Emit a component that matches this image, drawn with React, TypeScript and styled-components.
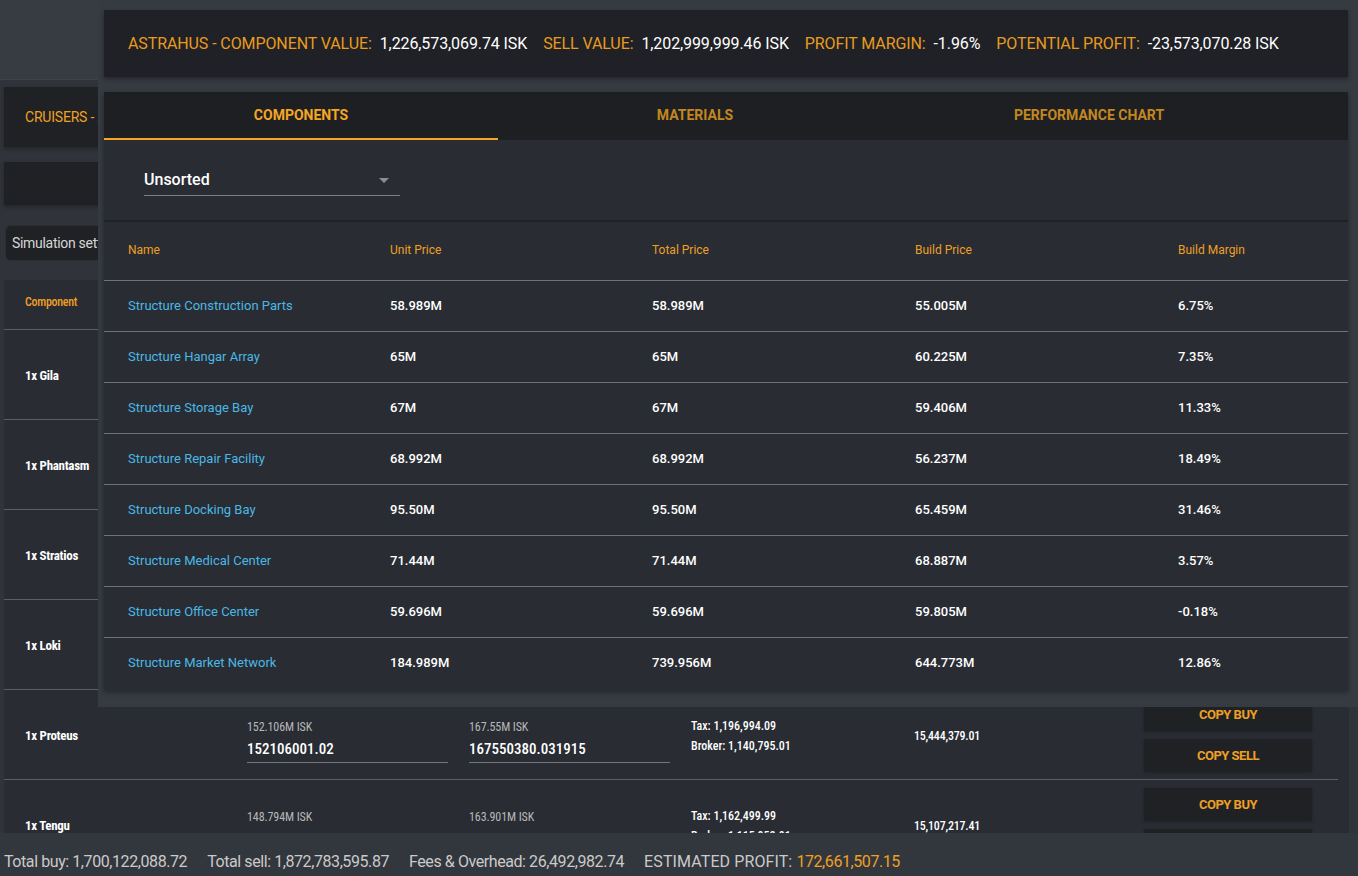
import React from "react"
import styled, { createGlobalStyle } from "styled-components"

const colors = {
  page: "#373b42",
  main: "#30343a",
  overlay: "#363a41",
  card: "#1f2125",
  tabBar: "#1d1f23",
  panel: "#292c33",
  orange: "#eea024",
  orangeDim: "#c4871f",
  cyan: "#4ab8e6",
  text: "#ffffff",
  muted: "#b8b8b8",
}

const GlobalStyle = createGlobalStyle`
  html, body {
    margin: 0;
    padding: 0;
    background: ${colors.page};
    font-family: Roboto, "Liberation Sans", sans-serif;
    overflow: hidden;
  }
  * { box-sizing: border-box; }
`

const Page = styled.div`
  width: 1358px;
  height: 876px;
  padding-top: 79px;
  position: relative;
`

/* ---------- background page ---------- */

const Main = styled.div`
  background: ${colors.main};
  border-top: 1px solid #3e424a;
  padding: 7px 9px 0 4px;
  height: 797px;
  font-family: "Roboto Condensed", Roboto, sans-serif;
`

const TitleCard = styled.div`
  height: 60px;
  background: ${colors.card};
  box-shadow: 0 2px 4px rgba(0, 0, 0, 0.3);
  display: flex;
  align-items: center;
  padding-left: 21px;
  color: ${colors.orange};
  font-family: Roboto, sans-serif;
  font-size: 14px;
  letter-spacing: -0.2px;
  margin-bottom: 15px;
`

const EmptyCard = styled.div`
  height: 43px;
  background: ${colors.card};
  box-shadow: 0 2px 4px rgba(0, 0, 0, 0.3);
  margin-bottom: 20px;
`

const SimButton = styled.button`
  display: flex;
  align-items: center;
  height: 36px;
  width: 220px;
  margin-left: 1px;
  padding: 0 6px;
  border: 1px solid #2b2e33;
  border-radius: 6px;
  background: ${colors.card};
  color: #d6d6d6;
  font-family: Roboto, sans-serif;
  font-size: 14px;
  letter-spacing: -0.3px;
  margin-bottom: 19px;
`

const Table = styled.div`
  background: ${colors.panel};
  height: 560px;
`

const Row = styled.div<{ $head?: boolean }>`
  display: grid;
  grid-template-columns: 222px 222px 222px 223px 230px 168px;
  align-items: center;
  height: ${p => (p.$head ? "50px" : "90px")};
  padding-left: 21px;
  margin-right: 11px;
  border-bottom: 1px solid #5b5e64;
`

const HeadCell = styled.div`
  color: ${colors.orange};
  font-size: 12px;
  font-weight: 500;
  letter-spacing: -0.3px;
  margin-top: -5px;
`

const ShipName = styled.div`
  color: ${colors.text};
  font-size: 13px;
  font-weight: 700;
  letter-spacing: -0.3px;
  margin-top: 2px;
`

const PriceGroup = styled.div`
  width: 201px;
  margin-top: 14px;
`

const PriceLabel = styled.div`
  color: ${colors.muted};
  font-size: 12px;
  line-height: 14px;
  letter-spacing: -0.1px;
  margin-bottom: 2px;
`

const PriceInput = styled.div`
  color: ${colors.text};
  font-size: 15px;
  font-weight: 500;
  line-height: 26px;
  border-bottom: 1px solid #73767c;
`

const Fees = styled.div`
  color: ${colors.text};
  font-size: 12px;
  line-height: 20px;
  font-weight: 500;
  margin-top: 2px;
`

const Profit = styled.div`
  color: ${colors.text};
  font-size: 12px;
  font-weight: 500;
  letter-spacing: -0.2px;
  margin-top: 2px;
`

const Buttons = styled.div`
  display: flex;
  flex-direction: column;
  gap: 8px;
`

const CopyButton = styled.button`
  height: 33px;
  width: 168px;
  border: none;
  background: ${colors.card};
  box-shadow: 0 1px 3px rgba(0, 0, 0, 0.25);
  color: ${colors.orange};
  font-family: Roboto, sans-serif;
  font-size: 13px;
  font-weight: 700;
  letter-spacing: -0.5px;
`

const Footer = styled.div`
  position: fixed;
  left: 0;
  right: 0;
  bottom: 0;
  height: 43px;
  background: #32363d;
  display: flex;
  align-items: flex-end;
  gap: 20px;
  padding: 0 4px 3px;
  color: #cacaca;
  font-size: 16px;
  line-height: 22px;
  letter-spacing: -0.42px;
`

const Highlight = styled.span`
  color: ${colors.orange};
`

const FooterStrong = styled.span`
  letter-spacing: 0.1px;
`

/* ---------- overlay dialog ---------- */

const Overlay = styled.div`
  position: fixed;
  left: 98px;
  top: 0;
  right: 0;
  height: 707px;
  background: ${colors.overlay};
  padding: 10px 10px 0 6px;
  display: flex;
  flex-direction: column;
  gap: 15px;
`

const Summary = styled.div`
  height: 67px;
  background: #1f2126;
  box-shadow: 0 2px 4px rgba(0, 0, 0, 0.35);
  display: flex;
  align-items: center;
  gap: 16px;
  padding: 0 24px 0;
  font-size: 16px;
  white-space: nowrap;
`

const SummaryItem = styled.span`
  display: flex;
  gap: 8px;
`

const SummaryLabel = styled.span`
  color: #e89b1e;
  letter-spacing: -0.1px;
`

const SummaryValue = styled.span`
  color: ${colors.text};
  letter-spacing: -0.1px;
`

const Panel = styled.div`
  height: 598px;
  background: ${colors.panel};
  box-shadow: 0 2px 5px rgba(0, 0, 0, 0.35);
  display: flex;
  flex-direction: column;
`

const Tabs = styled.div`
  display: flex;
  height: 48px;
  background: ${colors.tabBar};
`

const Tab = styled.div<{ $active?: boolean }>`
  width: 394px;
  display: flex;
  align-items: center;
  justify-content: center;
  font-size: 14px;
  font-weight: 700;
  text-transform: uppercase;
  color: ${p => (p.$active ? "#f5a623" : colors.orangeDim)};
  border-bottom: 2px solid ${p => (p.$active ? "#f5a623" : "transparent")};
`

const SortBar = styled.div`
  padding: 26px 0 24px 40px;
  border-bottom: 2px solid #1f2125;
`

const Select = styled.div`
  width: 256px;
  height: 30px;
  display: flex;
  align-items: center;
  justify-content: space-between;
  border-bottom: 1px solid #7b7e84;
  color: ${colors.text};
  font-size: 16px;
  font-weight: 500;
  padding-bottom: 2px;
`

const GridRow = styled.div<{ $head?: boolean; $last?: boolean }>`
  display: grid;
  grid-template-columns: 262px 262px 263px 263px 1fr;
  align-items: center;
  padding-left: 24px;
  height: ${p => (p.$head ? "59px" : "51px")};
  border-bottom: 1px solid ${p => (p.$last ? "transparent" : "#6f7278")};
  font-size: ${p => (p.$head ? "12px" : "13px")};
`

const ColHead = styled.div`
  color: ${colors.orange};
  margin-top: -2px;
`

const NameCell = styled.div`
  color: ${colors.cyan};
  margin-top: -2px;
`

const ValueCell = styled.div`
  color: ${colors.text};
  font-weight: 500;
  margin-top: -2px;
`

const ships = [
  { name: "1x Gila" },
  { name: "1x Phantasm" },
  { name: "1x Stratios" },
  { name: "1x Loki" },
  {
    name: "1x Proteus",
    buyLabel: "152.106M ISK",
    buy: "152106001.02",
    sellLabel: "167.55M ISK",
    sell: "167550380.031915",
    tax: "1,196,994.09",
    broker: "1,140,795.01",
    profit: "15,444,379.01",
  },
  {
    name: "1x Tengu",
    buyLabel: "148.794M ISK",
    buy: "148794000.00",
    sellLabel: "163.901M ISK",
    sell: "163901000.00",
    tax: "1,162,499.99",
    broker: "1,115,952.91",
    profit: "15,107,217.41",
  },
]

const components = [
  ["Structure Construction Parts", "58.989M", "58.989M", "55.005M", "6.75%"],
  ["Structure Hangar Array", "65M", "65M", "60.225M", "7.35%"],
  ["Structure Storage Bay", "67M", "67M", "59.406M", "11.33%"],
  ["Structure Repair Facility", "68.992M", "68.992M", "56.237M", "18.49%"],
  ["Structure Docking Bay", "95.50M", "95.50M", "65.459M", "31.46%"],
  ["Structure Medical Center", "71.44M", "71.44M", "68.887M", "3.57%"],
  ["Structure Office Center", "59.696M", "59.696M", "59.805M", "-0.18%"],
  ["Structure Market Network", "184.989M", "739.956M", "644.773M", "12.86%"],
]

const summary = [
  ["ASTRAHUS - COMPONENT VALUE:", "1,226,573,069.74 ISK"],
  ["SELL VALUE:", "1,202,999,999.46 ISK"],
  ["PROFIT MARGIN:", "-1.96%"],
  ["POTENTIAL PROFIT:", "-23,573,070.28 ISK"],
]

// rows hidden behind the dialog only show their ship name
function ShipRow({ ship }) {
  return (
    <Row>
      <ShipName>{ship.name}</ShipName>
      {ship.buy && (
        <>
          <PriceGroup>
            <PriceLabel>{ship.buyLabel}</PriceLabel>
            <PriceInput>{ship.buy}</PriceInput>
          </PriceGroup>
          <PriceGroup>
            <PriceLabel>{ship.sellLabel}</PriceLabel>
            <PriceInput>{ship.sell}</PriceInput>
          </PriceGroup>
          <Fees>
            <div>Tax: {ship.tax}</div>
            <div>Broker: {ship.broker}</div>
          </Fees>
          <Profit>{ship.profit}</Profit>
          <Buttons>
            <CopyButton>COPY BUY</CopyButton>
            <CopyButton>COPY SELL</CopyButton>
          </Buttons>
        </>
      )}
    </Row>
  )
}

export default function App() {
  return (
    <Page>
      <GlobalStyle />
      <Main>
        <TitleCard>CRUISERS - ASTRAHUS</TitleCard>
        <EmptyCard />
        <SimButton>Simulation settings</SimButton>
        <Table>
          <Row $head>
            <HeadCell>Component</HeadCell>
          </Row>
          {ships.map(s => (
            <ShipRow key={s.name} ship={s} />
          ))}
        </Table>
      </Main>

      <Footer>
        <span>Total buy: 1,700,122,088.72</span>
        <span>Total sell: 1,872,783,595.87</span>
        <span>Fees &amp; Overhead: 26,492,982.74</span>
        <span>
          <FooterStrong>ESTIMATED PROFIT: </FooterStrong>
          <Highlight>172,661,507.15</Highlight>
        </span>
      </Footer>

      <Overlay>
        <Summary>
          {summary.map(([label, value]) => (
            <SummaryItem key={label}>
              <SummaryLabel>{label}</SummaryLabel>
              <SummaryValue>{value}</SummaryValue>
            </SummaryItem>
          ))}
        </Summary>
        <Panel>
          <Tabs>
            <Tab $active>Components</Tab>
            <Tab>Materials</Tab>
            <Tab>Performance Chart</Tab>
          </Tabs>
          <SortBar>
            <Select>
              <span>Unsorted</span>
              <svg width="24" height="24" viewBox="0 0 24 24" style={{ marginRight: 4 }}>
                <path d="M7 10l5 5 5-5z" fill="#8b8e93" />
              </svg>
            </Select>
          </SortBar>
          <GridRow $head>
            <ColHead>Name</ColHead>
            <ColHead>Unit Price</ColHead>
            <ColHead>Total Price</ColHead>
            <ColHead>Build Price</ColHead>
            <ColHead>Build Margin</ColHead>
          </GridRow>
          {components.map(([name, unit, total, build, margin], i) => (
            <GridRow key={name} $last={i === components.length - 1}>
              <NameCell>{name}</NameCell>
              <ValueCell>{unit}</ValueCell>
              <ValueCell>{total}</ValueCell>
              <ValueCell>{build}</ValueCell>
              <ValueCell>{margin}</ValueCell>
            </GridRow>
          ))}
        </Panel>
      </Overlay>
    </Page>
  )
}
